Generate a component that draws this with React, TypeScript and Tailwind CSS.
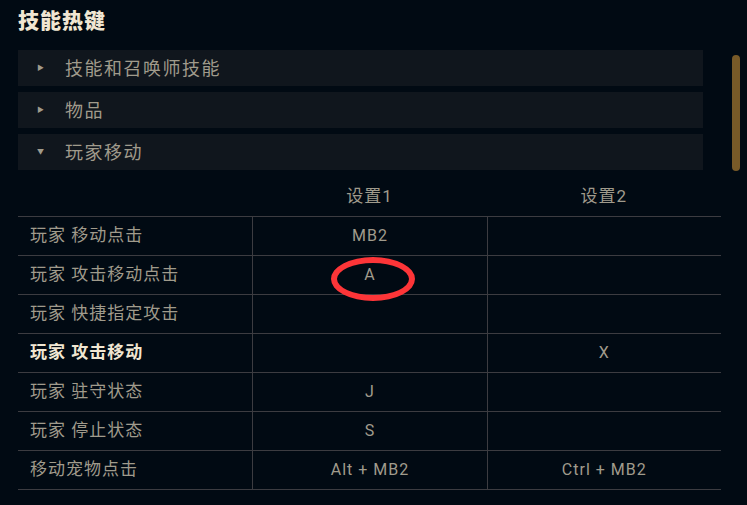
import { useState } from "react"

type Row = { name: string; a: string; b: string; bold?: boolean; mark?: boolean }

const rows: Row[] = [
  { name: "玩家 移动点击", a: "MB2", b: "" },
  { name: "玩家 攻击移动点击", a: "A", b: "", mark: true },
  { name: "玩家 快捷指定攻击", a: "", b: "" },
  { name: "玩家 攻击移动", a: "", b: "X", bold: true },
  { name: "玩家 驻守状态", a: "J", b: "" },
  { name: "玩家 停止状态", a: "S", b: "" },
  { name: "移动宠物点击", a: "Alt + MB2", b: "Ctrl + MB2" },
]

const sections = ["技能和召唤师技能", "物品", "玩家移动"]

const font = "font-['Roboto','Noto_Sans_CJK_SC',sans-serif]"

export default function App() {
  const [open] = useState(2)

  return (
    <div className={`relative w-[747px] h-[505px] overflow-hidden bg-[#010a13] ${font}`}>
      <div className="pl-[18px] pt-[7px] w-[721px]">
        <h2 className="text-[21px] leading-[28px] font-extrabold tracking-[1px] text-[#f0e6d2]">
          技能热键
        </h2>

        <div className="mt-[15px] w-[685px] flex flex-col gap-[6px]">
          {sections.map((s, i) => (
            <div key={s} className="h-[36px] bg-[#10161d] flex items-center">
              <span className="w-[47px] pl-[19px] text-[7px] text-[#a09b8c]">
                {i === open ? "▼" : "▶"}
              </span>
              <span className="text-[18px] tracking-[1.5px] text-[#a09b8c]">{s}</span>
            </div>
          ))}
        </div>

        <div className="text-[16px] tracking-[1px] text-[#a09b8c]">
          <div className="grid grid-cols-3 h-[47px] border-b border-[#3c3c41] text-[17px]">
            <div />
            <div className="flex items-center justify-center pt-[7px]">设置1</div>
            <div className="flex items-center justify-center pt-[7px]">设置2</div>
          </div>
          {rows.map((r) => (
            <div key={r.name} className="grid grid-cols-3 h-[39px] border-b border-[#3c3c41]">
              <div
                className={`flex items-center pl-[12px] text-[17px] ${
                  r.bold ? "text-[#f0e6d2] font-bold" : ""
                }`}
              >
                {r.name}
              </div>
              <div className="relative flex items-center justify-center border-l border-[#3c3c41]">
                {r.a}
                {r.mark && (
                  <div className="absolute left-[78px] top-[1px] w-[84px] h-[44px] rounded-[50%] border-[6px] border-[#fd3538]" />
                )}
              </div>
              <div className="flex items-center justify-center border-l border-[#3c3c41]">
                {r.b}
              </div>
            </div>
          ))}
        </div>
      </div>

      <div className="absolute left-[732px] top-[55px] w-[8px] h-[116px] rounded-full bg-[#785a28]" />
    </div>
  )
}
